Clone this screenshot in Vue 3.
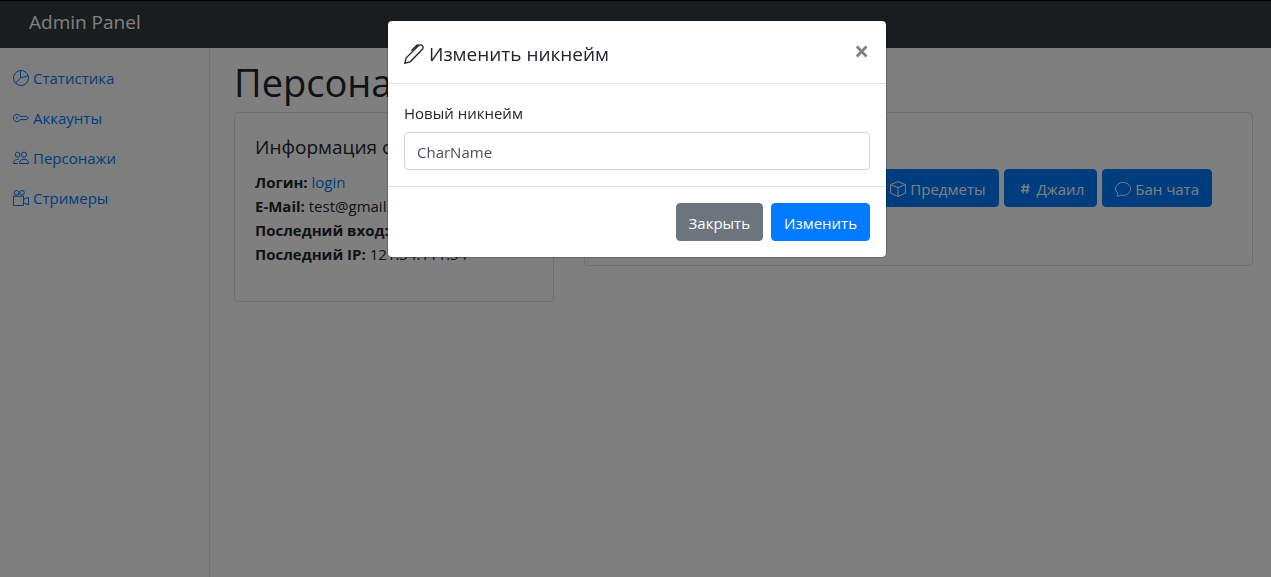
<script setup>
import { ref } from 'vue'

const nav = [
  { id: 'stats', label: 'Статистика' },
  { id: 'accounts', label: 'Аккаунты' },
  { id: 'characters', label: 'Персонажи' },
  { id: 'streamers', label: 'Стримеры' },
]
const nickname = ref('CharName')
</script>

<template>
  <div class="page">
    <header class="navbar"><a class="brand" href="#">Admin Panel</a></header>
    <div class="layout">
      <nav class="sidebar">
        <a v-for="item in nav" :key="item.id" class="nav-link" href="#">
          <svg class="icon" viewBox="0 0 16 16" aria-hidden="true">
            <g v-if="item.id === 'stats'">
              <circle cx="8" cy="8" r="7.5" />
              <path d="M7.5 .5V8L2.6 13.2M7.5 8L15 5.8" />
            </g>
            <g v-else-if="item.id === 'accounts'">
              <path d="M7.2 6.4A3.6 3.6 0 1 0 7.2 9.6H14l1.4-1.6L14 6.4Z" />
              <circle cx="4" cy="8" r=".6" />
            </g>
            <g v-else-if="item.id === 'characters'">
              <circle cx="4.6" cy="4.7" r="2.4" />
              <circle cx="11" cy="4.7" r="2.6" />
              <path d="M6.5 13.5h9c0-3-1.6-4.2-4.5-4.2s-4.5 1.2-4.5 4.2ZM4.8 13.5H.6c0-2.8 1.4-4.2 5.2-4.2" />
            </g>
            <g v-else>
              <circle cx="3.5" cy="2.8" r="2.3" />
              <circle cx="9" cy="2.8" r="2.3" />
              <path d="M.5 6.2h10v9.3H.5ZM10.5 9.4l5-2v7.4l-5-2" />
            </g>
          </svg>
          {{ item.label }}
        </a>
      </nav>
      <main class="content">
        <h1>Персонаж</h1>
        <div class="cards">
          <section class="card info">
            <h2>Информация о персонаже</h2>
            <p>
              <b>Логин:</b> <a href="#">login</a><br />
              <b>E-Mail:</b> test@gmail.com<br />
              <b>Последний вход:</b><br />
              <b>Последний IP:</b> 121.34.111.34
            </p>
          </section>
          <section class="card actions">
            <button class="btn primary" type="button">
              <svg class="icon" viewBox="0 0 16 16" aria-hidden="true">
                <path d="M8 .6L15.4 3.6V12.2L8 15.4L.6 12.2V3.6ZM.6 3.6L8 6.6L15.4 3.6M8 6.6V15.4" />
              </svg>
              Предметы
            </button>
            <button class="btn primary" type="button">
              <svg class="icon hash" viewBox="0 0 16 16" aria-hidden="true">
                <path d="M7.2 3L5.8 12.5M11.2 3L9.8 12.5M4.4 6H12.6M4 9.5H12.2" />
              </svg>
              Джаил
            </button>
            <button class="btn primary" type="button">
              <svg class="icon" viewBox="0 0 16 16" aria-hidden="true">
                <path d="M2.7 11.8C1.3 10.8 .5 9.4 .5 7.9C.5 4.3 3.8 1.5 8 1.5S15.5 4.3 15.5 7.9S12.2 14.4 8 14.4C7.2 14.4 6.4 14.3 5.7 14.1C4.8 14.8 3.3 15.3 1.7 15.2C2.5 14.2 2.9 13 2.7 11.8Z" />
              </svg>
              Бан чата
            </button>
          </section>
        </div>
      </main>
    </div>

    <div class="backdrop">
      <form class="modal" role="dialog" aria-labelledby="modal-title" @submit.prevent>
        <header class="modal-header">
          <h2 id="modal-title">
            <svg class="icon" viewBox="0 0 20 20" aria-hidden="true">
              <path d="M.8 19.2L2.2 13.8L14.7 1.6Q16.6 .2 18.4 1.6Q19.8 3.4 18.4 5.3L6.2 17.8ZM7.4 6.4L13 1.2H15.4" />
            </svg>
            Изменить никнейм
          </h2>
          <button class="close" type="button" aria-label="Закрыть окно">×</button>
        </header>
        <div class="modal-body">
          <label for="nickname">Новый никнейм</label>
          <input id="nickname" v-model="nickname" type="text" />
        </div>
        <footer class="modal-footer">
          <button class="btn secondary" type="button">Закрыть</button>
          <button class="btn primary" type="submit">Изменить</button>
        </footer>
      </form>
    </div>
  </div>
</template>

<style>
html, body { background: #fff; }
</style>

<style scoped>
.page, .page * { box-sizing: border-box; }
.page {
  display: flex;
  flex-direction: column;
  min-height: 100vh;
  color: #212529;
  font: 15px/24px "Open Sans", "Noto Sans", sans-serif;
}
h1, h2, p { margin: 0; font-weight: 400; }
a { color: #007bff; text-decoration: none; }
button, input { font: inherit; }
.icon {
  width: 16px;
  height: 16px;
  flex: none;
  fill: none;
  stroke: currentColor;
  stroke-width: 1;
}
.navbar {
  height: 48px;
  padding: 7px 29px;
  border-top: 1px solid #000;
  background: #343a40;
}
.brand { color: #fff; font-size: 19px; line-height: 28px; }
.layout { display: flex; flex: 1; }
.sidebar {
  width: 210px;
  flex: none;
  padding-top: 10px;
  border-right: 1px solid #dee2e6;
  background: #fcfcfc;
}
.nav-link {
  display: flex;
  align-items: center;
  gap: 4px;
  padding: 8px 13px;
}
.content { flex: 1; min-width: 0; padding: 10px 18px 24px 24px; }
h1 { padding-bottom: 6px; font-size: 38px; line-height: 48px; }
.cards { display: flex; align-items: flex-start; gap: 30px; }
.card {
  padding: 22px 20px 20px;
  border: 1px solid #dfdfdf;
  border-radius: 4px;
}
.info { width: 320px; flex: none; }
.card h2 { margin-bottom: 11px; font-size: 19px; }
.info p { margin-bottom: 15px; }
.actions {
  display: flex;
  flex: 1;
  justify-content: flex-end;
  gap: 5px;
  padding: 56px 40px 58px 20px;
}
.btn {
  display: flex;
  align-items: center;
  gap: 4px;
  padding: 7px 12px 5px;
  border: 1px solid transparent;
  border-radius: 4px;
  color: #fff;
  white-space: nowrap;
}
.primary { border-color: #007bff; background: #007bff; }
.secondary { border-color: #6c757d; background: #6c757d; }
.hash { stroke-width: 1.3; }
.backdrop {
  position: fixed;
  inset: 0;
  padding: 20px 0 0 3px;
  background: rgba(0, 0, 0, 0.5);
}
.modal {
  width: 500px;
  max-width: 100%;
  margin: 0 auto;
  border: 1px solid rgba(0, 0, 0, 0.2);
  border-radius: 5px;
  background: #fff;
  background-clip: padding-box;
}
.modal-header {
  display: flex;
  justify-content: space-between;
  align-items: flex-start;
  padding: 18px 16px 14px;
  border-bottom: 1px solid #dee2e6;
}
.modal-header h2 {
  display: flex;
  align-items: center;
  gap: 5px;
  font-size: 19px;
  line-height: 30px;
}
.modal-header .icon { width: 20px; height: 20px; stroke-width: 1.3; }
.close {
  padding: 0 1px;
  border: 0;
  background: none;
  color: #7f7f7f;
  font-size: 26px;
  font-weight: 700;
  line-height: 24px;
}
.modal-body { padding: 17px 16px 16px; }
label { display: block; margin-bottom: 7px; }
input {
  display: block;
  width: 100%;
  height: 38px;
  padding: 7px 12px 5px;
  border: 1px solid #ced4da;
  border-radius: 4px;
  background: #fff;
  color: #495057;
}
.modal-footer {
  display: flex;
  justify-content: flex-end;
  gap: 8px;
  padding: 16px;
  border-top: 1px solid #dee2e6;
}
</style>
